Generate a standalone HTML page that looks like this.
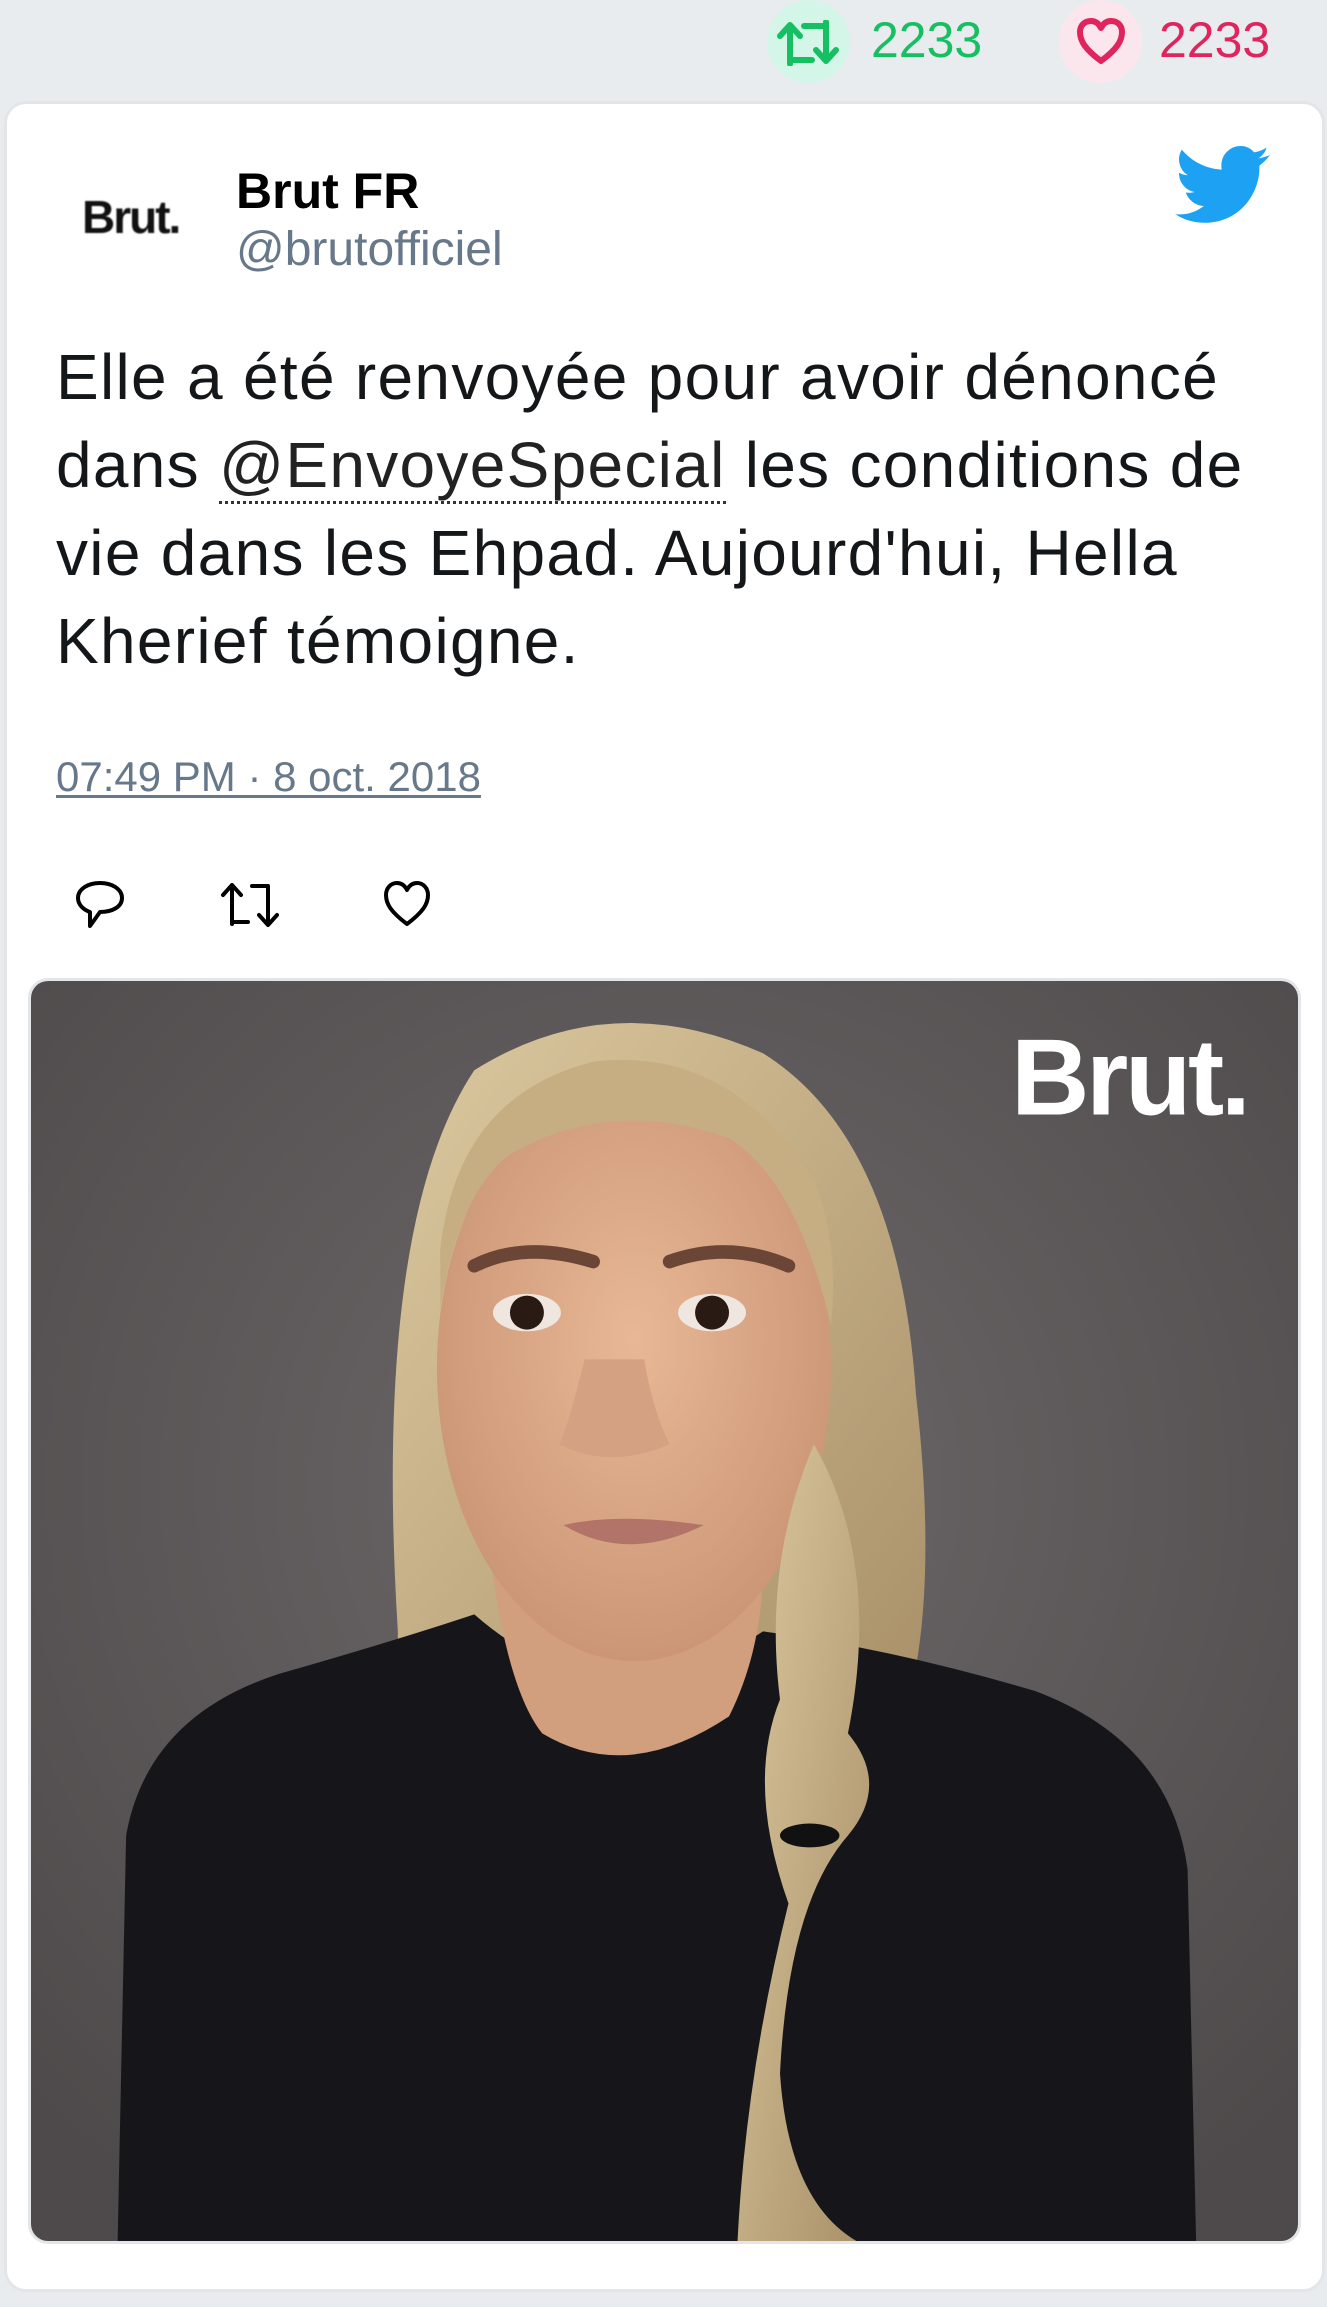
<!DOCTYPE html>
<html><head><meta charset="utf-8"><style>
*{margin:0;padding:0;box-sizing:border-box}
body{width:1327px;height:2307px;background:#e8ecef;font-family:"Liberation Sans",Arial,sans-serif;position:relative;overflow:hidden}
.abs{position:absolute}
.card{left:4px;top:101px;width:1321px;height:2191px;background:#fff;border-radius:22px;border:3px solid #e3e6e9}
.cnt{font-size:50px;top:10px;line-height:60px}
</style></head><body>
<div class="abs" style="left:767px;top:0;width:83px;height:83px;border-radius:50%;background:#d3f6e8"></div>
<svg class="abs" style="left:776px;top:20px" width="64" height="46" viewBox="0 0 64 46"><g fill="none" stroke="#17bf63" stroke-width="6" stroke-linecap="round" stroke-linejoin="round"><path d="M14 44V6M4 16L14 5 24 16M14 40h22"/><path d="M50 2v38M40 30l10 11 10-11M50 6H28"/></g></svg>
<div class="abs cnt" style="left:871px;color:#17bf63">2233</div>
<div class="abs" style="left:1059px;top:0;width:83px;height:83px;border-radius:50%;background:#fce6ee"></div>
<svg class="abs" style="left:1075px;top:17px" width="52" height="50" viewBox="0 0 52 50"><path d="M26 44C10 32 5 24 5 15 5 8 10 4 16 4c5 0 8 3 10 7 2-4 5-7 10-7 6 0 11 4 11 11 0 9-5 17-21 29z" fill="none" stroke="#e0245e" stroke-width="6" stroke-linejoin="round"/></svg>
<div class="abs cnt" style="left:1159px;color:#e0245e">2233</div>

<div class="abs card"></div>
<div class="abs" style="left:82px;top:190px;font-size:46px;font-weight:bold;letter-spacing:-2px;color:#111;filter:blur(0.8px)">Brut.</div>
<div class="abs" style="left:236px;top:162px;font-size:50px;font-weight:bold;color:#000">Brut FR</div>
<div class="abs" style="left:236px;top:222px;font-size:48px;color:#66788a">@brutofficiel</div>
<svg class="abs" style="left:1175px;top:146px" width="96" height="80" viewBox="0 0 24 20"><path fill="#1da1f2" d="M23.6 2.3c-.9.4-1.8.6-2.8.8 1-.6 1.8-1.6 2.1-2.7-.9.6-2 1-3.1 1.200C19 .6 17.8 0 16.4 0c-2.7 0-4.8 2.2-4.800 4.8 0 .4 0 .8.1 1.1C7.7 5.7 4.1 3.8 1.7.9c-.4.7-.7 1.6-.7 2.4 0 1.7.9 3.2 2.2 4-.8 0-1.5-.2-2.2-.6v.1c0 2.3 1.7 4.3 3.9 4.7-.4.1-.8.2-1.3.2-.3 0-.6 0-.9-.1.6 1.9 2.4 3.3 4.5 3.4-1.7 1.3-3.7 2.1-6 2.1-.4 0-.8 0-1.200-.1 2.1 1.4 4.7 2.2 7.4 2.2 8.9 0 13.7-7.4 13.7-13.7v-.6c.9-.7 1.8-1.5 2.5-2.5z"/></svg>

<div class="abs" style="left:56px;top:333px;width:1270px;font-size:64px;line-height:88px;color:#14171a;letter-spacing:1.3px;white-space:nowrap">Elle a été renvoyée pour avoir dénoncé<br>dans <span style="border-bottom:3px dotted #333;line-height:1;color:#222">@EnvoyeSpecial</span> les conditions de<br>vie dans les Ehpad. Aujourd'hui, Hella<br>Kherief témoigne.</div>

<div class="abs" style="left:56px;top:753px;font-size:42px;color:#66788a;text-decoration:underline;text-decoration-thickness:3px;text-underline-offset:4px">07:49 PM · 8 oct. 2018</div>

<svg class="abs" style="left:74px;top:880px" width="52" height="50" viewBox="0 0 52 50"><path d="M26 3C14 3 4 9 4 18c0 7 6 12 12 14l0 14 10-14c12 0 22-5 22-14S38 3 26 3z" fill="none" stroke="#000" stroke-width="4" stroke-linejoin="round"/></svg>
<svg class="abs" style="left:218px;top:882px" width="64" height="46" viewBox="0 0 64 46"><g fill="none" stroke="#000" stroke-width="4" stroke-linecap="round" stroke-linejoin="round"><path d="M14 42V4M5 13L14 3 23 13M14 40h16"/><path d="M50 4v38M41 33l9 10 9-10M50 4H34"/></g></svg>
<svg class="abs" style="left:381px;top:880px" width="52" height="48" viewBox="0 0 52 48"><path d="M26 44C10 32 5 24 5 15 5 8 10 3 16 3c5 0 8 3 10 7 2-4 5-7 10-7 6 0 11 5 11 12 0 9-5 17-21 29z" fill="none" stroke="#000" stroke-width="4" stroke-linejoin="round"/></svg>

<div class="abs" style="left:28px;top:978px;width:1273px;height:1266px;border:3px solid #e3e6e9;border-radius:20px;overflow:hidden">
<svg width="1267" height="1260" viewBox="38 15 1492 1482" preserveAspectRatio="none" style="display:block">
<defs>
<radialGradient id="bg" cx="0.5" cy="0.4" r="0.7"><stop offset="0" stop-color="#6d6869"/><stop offset="1" stop-color="#4e4a4b"/></radialGradient>
<linearGradient id="hair" x1="0" y1="0" x2="1" y2="1"><stop offset="0" stop-color="#dcc9a0"/><stop offset="1" stop-color="#a88f68"/></linearGradient>
<radialGradient id="skin" cx="0.5" cy="0.45" r="0.6"><stop offset="0" stop-color="#e8b896"/><stop offset="1" stop-color="#c99373"/></radialGradient>
</defs>
<rect x="38" y="15" width="1492" height="1482" fill="url(#bg)"/>
<path d="M470 780 Q440 300 560 120 Q720 20 900 100 Q1060 200 1080 500 Q1110 760 1060 900 L470 900Z" fill="url(#hair)"/>
<path d="M140 1497 L150 1020 Q175 880 330 830 Q470 790 560 760 Q720 900 900 780 Q1050 800 1220 850 Q1380 910 1400 1060 L1410 1497Z" fill="#16161a"/>
<path d="M580 700 Q600 850 640 900 Q740 960 860 880 Q900 800 900 700Z" fill="#d19e7e"/>
<ellipse cx="748" cy="470" rx="232" ry="345" fill="url(#skin)"/>
<path d="M520 330 Q540 150 700 110 Q860 90 960 250 Q990 320 980 420 Q940 250 860 200 Q720 150 600 220 Q540 270 520 400Z" fill="#c6ad82"/>
<path d="M560 350 Q620 320 700 345" stroke="#6b4636" stroke-width="16" fill="none" stroke-linecap="round"/>
<path d="M790 345 Q860 320 930 350" stroke="#6b4636" stroke-width="16" fill="none" stroke-linecap="round"/>
<ellipse cx="622" cy="405" rx="40" ry="22" fill="#f0e6e0"/><circle cx="622" cy="405" r="20" fill="#2a1a14"/>
<ellipse cx="840" cy="405" rx="40" ry="22" fill="#f0e6e0"/><circle cx="840" cy="405" r="20" fill="#2a1a14"/>
<path d="M690 460 Q670 540 660 560 Q720 590 790 560 Q770 520 760 460" fill="#d4a182"/>
<path d="M665 655 Q730 640 830 655 Q740 700 665 655Z" fill="#b27468"/>
<path d="M960 560 Q1040 700 1000 900 Q1050 960 1000 1020 Q930 1100 920 1300 Q930 1450 1010 1497 L870 1497 Q880 1300 930 1100 Q880 960 920 860 Q900 700 960 560Z" fill="url(#hair)"/>
<ellipse cx="955" cy="1020" rx="35" ry="14" fill="#111"/>
<text x="1192" y="172" font-family="Liberation Sans,sans-serif" font-weight="bold" font-size="128" fill="#fff" letter-spacing="-4">Brut.</text>
</svg>
</div>
</body></html>
